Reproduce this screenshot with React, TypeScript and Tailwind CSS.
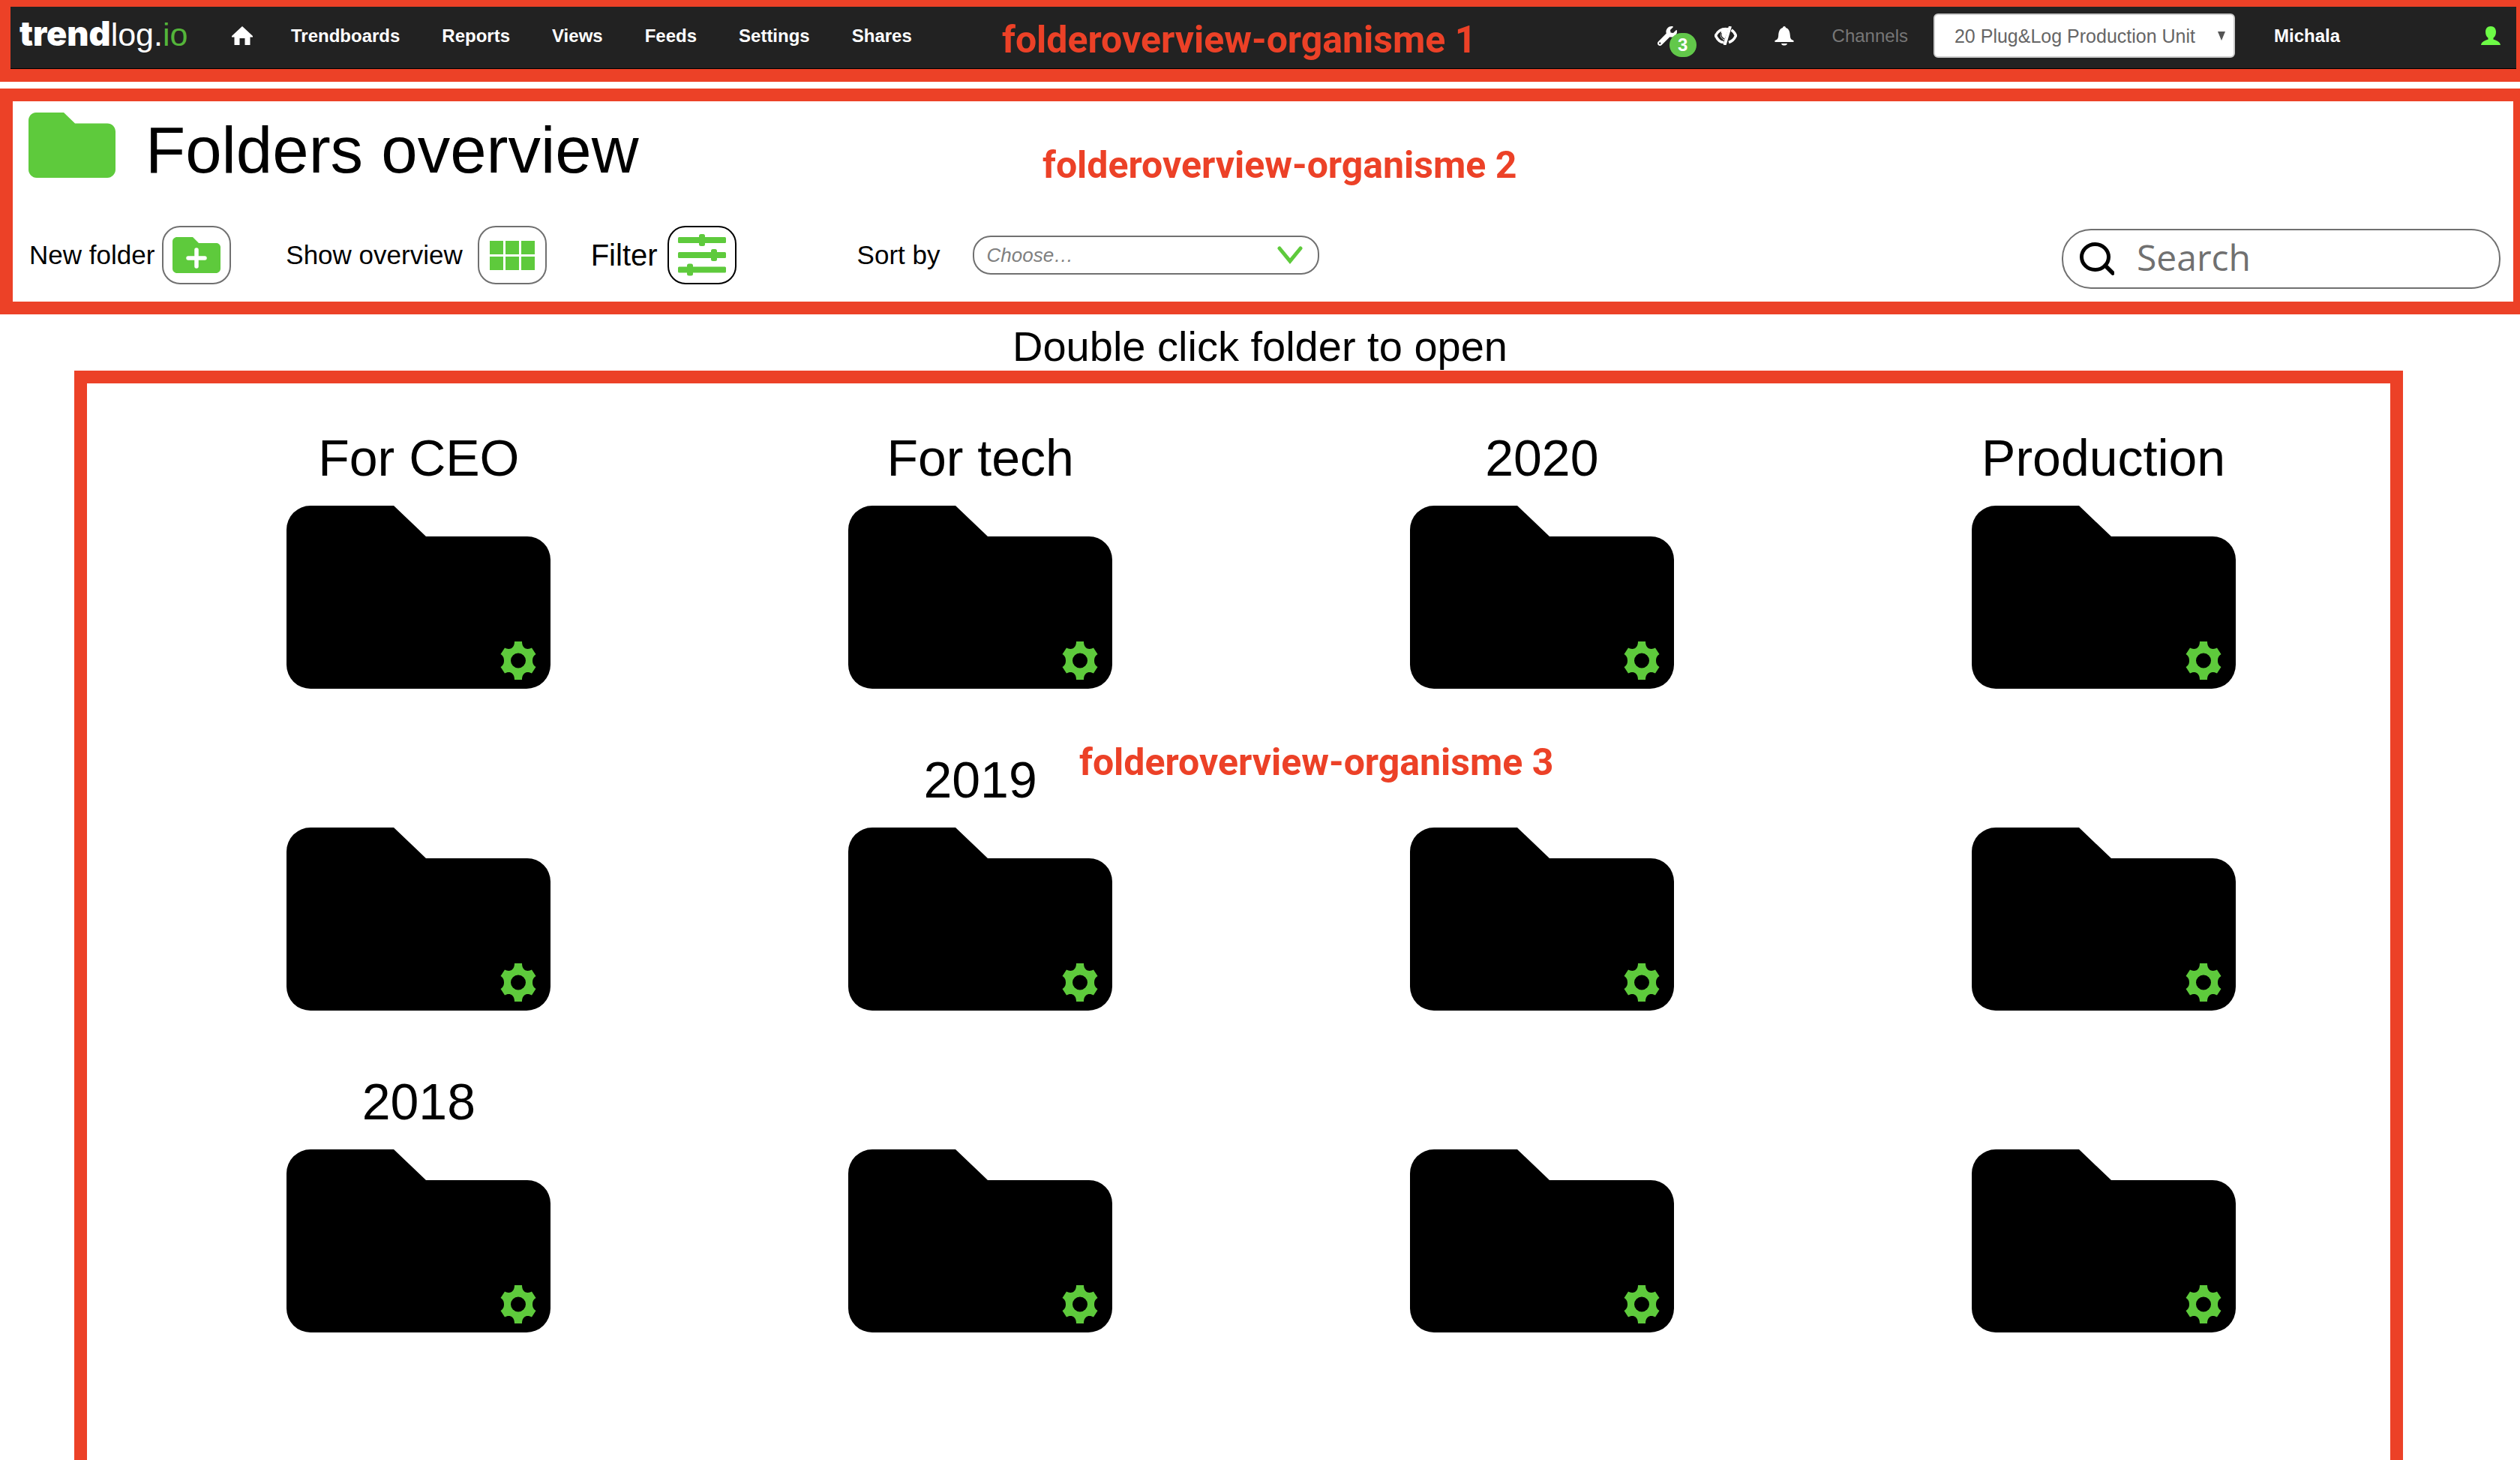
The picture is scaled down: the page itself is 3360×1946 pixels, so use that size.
import React from 'react';
import { FaWrench } from 'react-icons/fa';

const navItems = ['Trendboards', 'Reports', 'Views', 'Feeds', 'Settings', 'Shares'];

const folders = [
  'For CEO', 'For tech', '2020', 'Production',
  '', '2019', '', '',
  '2018', '', '', '',
];

function HomeIcon() {
  return (
    <svg viewBox="0 0 28 25" className="h-[25px] w-7" fill="#fff" aria-hidden="true">
      <path d="M14 0 L28 13 V14.500 H24.500 V25 H17.500 V16 H10.500 V25 H3.500 V14.500 H0 V13 Z" />
    </svg>
  );
}

function HiddenEyeIcon() {
  return (
    <svg viewBox="0 0 30 25" className="h-[25px] w-[30px]" aria-hidden="true">
      <path d="M15.500 3.500 C9 3.500 4 7 1.500 12.500 C4 18 8 21.500 12.500 21.500" fill="none" stroke="#fff" strokeWidth="3.500" />
      <path d="M19 2 C15 1.500 11 3 8 6 L9 8 C7.500 10 7.500 13 9 15.500 L13 19 Z" fill="#fff" />
      <path d="M9 9 C8.500 13 10.500 16 13.500 17" fill="none" stroke="#222" strokeWidth="1.200" />
      <path d="M21 0 L13.500 25" stroke="#fff" strokeWidth="4" />
      <path d="M22.500 5 C25 6.500 27.500 9.500 28.500 12.500 C26.500 17 23.500 20 19 21.500" fill="none" stroke="#fff" strokeWidth="3.500" />
    </svg>
  );
}

function BellIcon() {
  return (
    <svg viewBox="0 0 26 26" className="size-[26px]" fill="#fff" aria-hidden="true">
      <path d="M13 0 C14.500 0 15 1 15 2 C19 3 20.500 7 20.800 12 C21 16 22 18 25.500 19 V21 H.500 V19 C4 18 5 16 5.200 12 C5.500 7 7 3 11 2 C11 1 11.500 0 13 0 Z" />
      <path d="M9 23 H17 C16.500 25 15 25.600 13 25.600 C11 25.600 9.500 25 9 23 Z" />
    </svg>
  );
}

function UserIcon() {
  return (
    <svg viewBox="0 0 26 25" className="h-[25px] w-[26px]" fill="#6dfb46" aria-hidden="true">
      <path d="M13 0 C17.500 0 20 3 20 7.500 C20 11.500 18.500 14 16.500 15.500 V17.500 C20 18.500 25.500 20.500 26 25 H0 C.500 20.500 6 18.500 9.500 17.500 V15.500 C7.500 14 6 11.500 6 7.500 C6 3 8.500 0 13 0 Z" />
    </svg>
  );
}

function SmallFolder({ className }: { className: string }) {
  return (
    <svg viewBox="0 0 116 87" className={className} fill="#5eca3c" aria-hidden="true">
      <path d="M10 0 H47 L62 14.500 H105 C111 14.500 116 19 116 25.500 V76 C116 82 111 87 105 87 H11 C5 87 0 82 0 76 V11 C0 5 4 0 10 0 Z" />
    </svg>
  );
}

function FolderShape() {
  return (
    <svg viewBox="0 0 352 244" className="h-[244px] w-[352px]" fill="#000" aria-hidden="true">
      <path d="M32 0 H143 L186 41 H321 A31 31 0 0 1 352 72 V212 A32 32 0 0 1 320 244 H32 A32 32 0 0 1 0 212 V32 A32 32 0 0 1 32 0 Z" />
    </svg>
  );
}

function GearIcon() {
  return (
    <svg viewBox="0 0 48 51" className="h-[51px] w-12" fill="#5eca3c" aria-hidden="true">
      <path
        fillRule="evenodd"
        d="M19 0 H29 C29 5 31 8.500 34 9.500 C37 10.500 40 9.500 42 8.500 L47.500 17 C44 19 43 22 43 25.500 C43 29 44 32 47.500 34 L42 42.500 C40 41.500 37 40.500 34 41.500 C31 42.500 29 46 29 51 H19 C19 46 17 42.500 14 41.500 C11 40.500 8 41.500 6 42.500 L.500 34 C4 32 5 29 5 25.500 C5 22 4 19 .500 17 L6 8.500 C8 9.500 11 10.500 14 9.500 C17 8.500 19 5 19 0 Z M24 15.500 A10 10 0 0 0 24 35.500 A10 10 0 0 0 24 15.500 Z"
      />
    </svg>
  );
}

function SlidersIcon() {
  return (
    <svg viewBox="0 0 64 56" className="h-14 w-16" fill="#5eca3c" aria-hidden="true">
      <rect x="0" y="4" width="64" height="8" rx="1.500" />
      <rect x="28" y="0" width="8" height="16" rx="2.500" />
      <rect x="0" y="24" width="64" height="8" rx="1.500" />
      <rect x="44" y="20" width="8" height="16" rx="2.500" />
      <rect x="0" y="43.500" width="64" height="8" rx="1.500" />
      <rect x="12" y="39.500" width="8" height="16" rx="2.500" />
    </svg>
  );
}

const toolButton = 'flex h-[78px] w-[92px] items-center justify-center rounded-3xl border-2 bg-white';
const annotation = 'absolute whitespace-nowrap font-[Roboto,sans-serif] text-[50px] leading-none font-bold text-[#ec4127]';

export default function App() {
  return (
    <div className="flex min-h-screen flex-col bg-white font-['Liberation_Sans',Arial,sans-serif] text-black">
      <header className="relative bg-[#ec4127] pt-[9px] pr-[5px] pb-[17px] pl-[14px]">
        <div className="flex h-[83px] items-center border-b border-black bg-[#222] pr-[21px] pb-[5px] pl-3 text-2xl leading-8 text-white">
          <a href="#" className="flex w-[283px] items-baseline pb-1.5 text-[43px] leading-none" aria-label="trendlog.io">
            <span className="font-[Inter,sans-serif] text-[45px] leading-none font-black">trend</span>
            <span>log.</span>
            <span className="text-[#54b53a]">io</span>
          </a>
          <a href="#" aria-label="Home"><HomeIcon /></a>
          <nav className="ml-[51px] flex gap-14 font-bold">
            {navItems.map((item) => (
              <a key={item} href="#">{item}</a>
            ))}
          </nav>
          <div className="ml-auto flex items-center">
            <button type="button" aria-label="Service, 3 notifications" className="relative">
              <FaWrench className="size-[26px]" />
              <span className="absolute top-[9px] left-4 flex h-8 w-9 items-center justify-center rounded-full bg-[#62c84a] text-2xl font-bold">3</span>
            </button>
            <button type="button" aria-label="Hide" className="ml-[50px]"><HiddenEyeIcon /></button>
            <button type="button" aria-label="Alerts" className="ml-[50px]"><BellIcon /></button>
            <label htmlFor="channel" className="ml-[51px] text-[#777]">Channels</label>
            <div className="relative ml-[34px]">
              <select id="channel" className="h-[59px] w-[402px] appearance-none rounded-md border-2 border-[#ccc] bg-white pl-[26px] text-[25px] text-[#666]">
                <option>20 Plug&amp;Log Production Unit</option>
              </select>
              <svg viewBox="0 0 12 12" className="pointer-events-none absolute top-6 right-3 size-3" fill="#555" aria-hidden="true">
                <path d="M1 0 H11 L6 12 Z" />
              </svg>
            </div>
            <a href="#" className="ml-[52px] font-bold">Michala</a>
            <button type="button" aria-label="Account" className="ml-[188px]"><UserIcon /></button>
          </div>
        </div>
        <p className={`${annotation} top-7 left-[1336px]`}>folderoverview-organisme 1</p>
      </header>

      <section className="relative mt-[9px] border-t-[17px] border-r-[9px] border-b-[17px] border-l-[17px] border-[#ec4127] pt-[15px] pr-[17px] pb-[17px] pl-[21px]">
        <div className="flex items-start gap-10">
          <SmallFolder className="h-[87px] w-[116px]" />
          <h1 className="text-[87px] leading-[100px]">Folders overview</h1>
        </div>
        <div className="mt-[51px] flex items-start justify-between pl-px">
          <div className="flex items-center text-[35px]">
            <label htmlFor="new-folder">New folder</label>
            <button id="new-folder" type="button" className={`${toolButton} ml-2.5 border-[#707070]`}>
              <svg viewBox="0 0 64 48" className="h-12 w-16" fill="#5eca3c" aria-hidden="true">
                <path d="M6 0 H27 L35 8 H58 C61 8 64 10 64 13.500 V42 C64 45.500 61 48 58 48 H6 C3 48 0 45.500 0 42 V6 C0 2.500 3 0 6 0 Z" />
                <path d="M32 17 V39 M21 28 H43" stroke="#fff" strokeWidth="5.500" strokeLinecap="round" />
              </svg>
            </button>
            <label htmlFor="show-overview" className="ml-[73px]">Show overview</label>
            <button id="show-overview" type="button" className={`${toolButton} ml-5 border-[#707070]`}>
              <span className="grid grid-cols-3 gap-[3px]">
                {[0, 1, 2, 3, 4, 5].map((n) => (
                  <span key={n} className="size-[18px] bg-[#5eca3c]" />
                ))}
              </span>
            </button>
            <label htmlFor="filter" className="ml-[59px] text-[40px]">Filter</label>
            <button id="filter" type="button" className={`${toolButton} ml-[13px] border-black`}>
              <SlidersIcon />
            </button>
            <label htmlFor="sort" className="ml-[161px]">Sort by</label>
            <div className="relative ml-11">
              <select id="sort" className="block h-[52px] w-[462px] appearance-none rounded-3xl border-2 border-[#707070] bg-white pl-4 text-[26px] text-[#808080] italic">
                <option>Choose…</option>
              </select>
              <svg viewBox="0 0 34 24" className="pointer-events-none absolute top-3.5 right-[22px] h-6 w-[34px]" fill="none" stroke="#5eca3c" strokeWidth="5" strokeLinecap="round" aria-hidden="true">
                <path d="M3 3 L17 20 L31 3" />
              </svg>
            </div>
          </div>
          <div className="mt-1 flex h-20 w-[585px] items-center gap-[30px] rounded-[39px] border-2 border-[#707070] pl-[22px]">
            <svg viewBox="0 0 46 44" className="h-11 w-[46px] shrink-0" fill="none" stroke="#000" strokeLinecap="round" aria-hidden="true">
              <ellipse cx="20.500" cy="19.500" rx="18" ry="17" strokeWidth="5" />
              <path d="M34 31 L44 41" strokeWidth="5.500" />
            </svg>
            <input
              type="search"
              aria-label="Search"
              placeholder="Search"
              className="min-w-0 flex-1 bg-transparent pb-1 font-['Open_Sans',sans-serif] text-5xl leading-[60px] outline-none placeholder:text-[#707070]"
            />
          </div>
        </div>
        <p className={`${annotation} top-[60px] left-[1373px]`}>folderoverview-organisme 2</p>
      </section>

      <p className="pt-[11px] text-center text-[56px] leading-[64px]">Double click folder to open</p>

      <main className="relative mr-[156px] ml-[99px] flex-1 border-x-[17px] border-t-[17px] border-[#ec4127] pt-[59px] pr-2 pb-16 pl-[68px]">
        <ul className="grid grid-cols-4 gap-y-[81px]">
          {folders.map((name, i) => (
            <li key={i} className="flex flex-col items-center gap-6">
              <h2 className="h-20 text-[68px] leading-[80px]">{name}</h2>
              <div className="relative">
                <FolderShape />
                <button type="button" aria-label="Folder settings" className="absolute right-[19px] bottom-3">
                  <GearIcon />
                </button>
              </div>
            </li>
          ))}
        </ul>
        <p className={`${annotation} top-[480px] left-[1323px]`}>folderoverview-organisme 3</p>
      </main>
    </div>
  );
}
